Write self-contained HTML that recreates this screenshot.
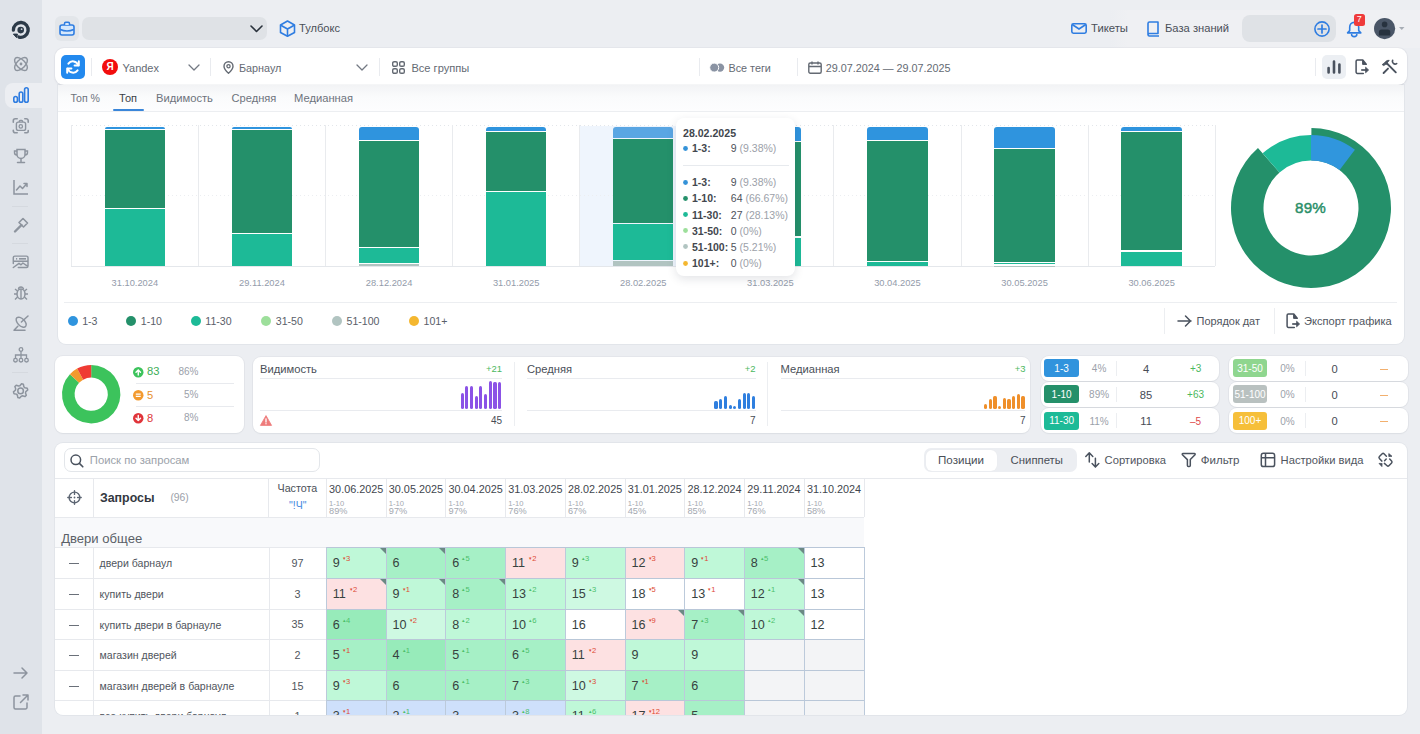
<!DOCTYPE html>
<html><head><meta charset="utf-8">
<style>
*{box-sizing:border-box;margin:0;padding:0}
html,body{width:1420px;height:734px;overflow:hidden}
body{background:#eceef2;font-family:"Liberation Sans",sans-serif;color:#474c55;position:relative}
.a{position:absolute}
.t{position:absolute;white-space:nowrap;line-height:1}
svg{position:absolute;overflow:visible}
</style></head><body>
<div class="a" style="left:0.00px;top:0.00px;width:42.00px;height:734.00px;background:#dfe3e9;border-radius:0px;"></div><div class="a" style="left:5.00px;top:83.00px;width:40.00px;height:25.00px;background:#eceef2;border-radius:0px;border-radius:8px 0 0 8px"></div><svg style="left:8.00px;top:18.00px;" width="26" height="24" viewBox="0 0 26 24"><path d="M5.4 12.16A7.4 7.4 0 1 1 10.88 19.05" fill="none" stroke="#2c3a48" stroke-width="3.3" stroke-linecap="round"/>
<circle cx="12.7" cy="12.1" r="3.3" fill="#2c3a48"/><circle cx="13.6" cy="11.2" r="0.9" fill="#c9d2dc"/>
<path d="M5.4 16.1L9.5 16.1 8.5 19.6Z" fill="#2c3a48" stroke="#2c3a48" stroke-width="1" stroke-linejoin="round"/></svg><svg style="left:13.00px;top:56.00px;" width="16" height="16" viewBox="0 0 16 16"><ellipse cx="8" cy="8" rx="8" ry="4.2" transform="rotate(45 8 8)" fill="none" stroke="#8d949e" stroke-width="1.5"/>
<ellipse cx="8" cy="8" rx="8" ry="4.2" transform="rotate(-45 8 8)" fill="none" stroke="#8d949e" stroke-width="1.5"/><circle cx="8" cy="8" r="1.4" fill="#8d949e"/></svg><svg style="left:13.00px;top:87.00px;" width="16" height="16" viewBox="0 0 16 16"><rect x="0.8" y="9.5" width="3.6" height="5.7" rx="1.8" fill="none" stroke="#2f7de1" stroke-width="1.6"/>
<rect x="6.2" y="5" width="3.6" height="10.2" rx="1.8" fill="none" stroke="#2f7de1" stroke-width="1.6"/>
<rect x="11.6" y="0.8" width="3.6" height="14.4" rx="1.8" fill="none" stroke="#2f7de1" stroke-width="1.6"/></svg><svg style="left:10.00px;top:116.00px;" width="22" height="22" viewBox="0 0 22 22"><path d="M3.3 6.3V4.7a2 2 0 0 1 2-2h1.9M14.8 2.7h1.4a2 2 0 0 1 2 2v1.6M18.2 14.6v0.9a1.2 1.2 0 0 1-1.2 1.2H14.8M7.2 16.7H5.3a2 2 0 0 1-2-2v-0.5" fill="none" stroke="#8d949e" stroke-width="1.6" stroke-linecap="round"/><rect x="6.4" y="6.1" width="9.2" height="8.3" rx="2" fill="none" stroke="#8d949e" stroke-width="1.4"/><path d="M9.3 6V5.4a0.9 0.9 0 0 1 .9-.9h1.5a0.9 0.9 0 0 1 .9.9V6" fill="none" stroke="#8d949e" stroke-width="1.3"/><circle cx="10.8" cy="10.4" r="1.7" fill="none" stroke="#8d949e" stroke-width="1.3"/></svg><svg style="left:13.00px;top:148.00px;" width="16" height="16" viewBox="0 0 16 16"><path d="M4 1.5h8v5a4 4 0 0 1-8 0z" fill="none" stroke="#8d949e" stroke-width="1.5"/><path d="M4 3H1.5v1.5A2.5 2.5 0 0 0 4 7M12 3h2.5v1.5A2.5 2.5 0 0 1 12 7" fill="none" stroke="#8d949e" stroke-width="1.4"/>
<path d="M8 10.5v3M4.5 14.5h7" fill="none" stroke="#8d949e" stroke-width="1.5" stroke-linecap="round"/></svg><svg style="left:13.00px;top:179.00px;" width="16" height="16" viewBox="0 0 16 16"><path d="M1 1v14h14" fill="none" stroke="#8d949e" stroke-width="1.5"/><path d="M3.5 11l3.5-4 2.5 2.5 4.5-5M11 4.5h3v3" fill="none" stroke="#8d949e" stroke-width="1.5" stroke-linejoin="round" stroke-linecap="round"/></svg><div class="a" style="left:12.00px;top:206.00px;width:16.00px;height:1.00px;background:#d5d9df;border-radius:0px;"></div><svg style="left:13.00px;top:217.00px;" width="16" height="16" viewBox="0 0 16 16"><path d="M2 14.5l6.5-6.5" stroke="#8d949e" stroke-width="2.4" stroke-linecap="round"/><path d="M6 5.5l4-4 4.5 4.5-4 4z" fill="none" stroke="#8d949e" stroke-width="1.6" stroke-linejoin="round"/></svg><div class="a" style="left:12.00px;top:243.00px;width:16.00px;height:1.00px;background:#d5d9df;border-radius:0px;"></div><svg style="left:10.00px;top:251.00px;" width="22" height="22" viewBox="0 0 22 22"><path d="M3.3 12.5V6.6a1.5 1.5 0 0 1 1.5-1.5h11.7a1.5 1.5 0 0 1 1.5 1.5v8.4a1.5 1.5 0 0 1-1.5 1.5H8.3M3.4 10.2h14.6M3.3 16.5L9 12.3l2 1.5 1.9-1.8 3.8 2.6" fill="none" stroke="#8d949e" stroke-width="1.45" stroke-linejoin="round" stroke-linecap="round"/><rect x="6" y="7" width="1.2" height="1.6" fill="#8d949e"/><rect x="9" y="7" width="7" height="1.6" fill="#8d949e"/></svg><svg style="left:13.00px;top:285.00px;" width="16" height="16" viewBox="0 0 16 16"><ellipse cx="8" cy="9" rx="4" ry="5" fill="none" stroke="#8d949e" stroke-width="1.5"/><path d="M8 4v10M4 9H1M15 9h-3M4.5 6L2 4M11.5 6L14 4M4.5 12L2 14.5M11.5 12L14 14.5M5.5 4.5A2.5 2.5 0 0 1 10.5 4.5" fill="none" stroke="#8d949e" stroke-width="1.4"/></svg><svg style="left:10.00px;top:311.00px;" width="22" height="22" viewBox="0 0 22 22"><ellipse cx="11.2" cy="11.2" rx="6.2" ry="3.5" transform="rotate(45 11.2 11.2)" fill="none" stroke="#8d949e" stroke-width="1.5"/><path d="M11.4 11L18 5M4 19.2h11M4 19.2l3.8-4" fill="none" stroke="#8d949e" stroke-width="1.5" stroke-linecap="round"/></svg><svg style="left:13.00px;top:347.00px;" width="16" height="16" viewBox="0 0 16 16"><circle cx="8" cy="2.5" r="1.8" fill="none" stroke="#8d949e" stroke-width="1.3"/><circle cx="2.5" cy="13.2" r="1.8" fill="none" stroke="#8d949e" stroke-width="1.3"/><circle cx="8" cy="13.2" r="1.8" fill="none" stroke="#8d949e" stroke-width="1.3"/><circle cx="13.5" cy="13.2" r="1.8" fill="none" stroke="#8d949e" stroke-width="1.3"/>
<path d="M8 4.3v7M2.5 11.4V8h11v3.4" fill="none" stroke="#8d949e" stroke-width="1.3"/></svg><div class="a" style="left:12.00px;top:372.00px;width:16.00px;height:1.00px;background:#d5d9df;border-radius:0px;"></div><svg style="left:10.00px;top:379.00px;" width="22" height="22" viewBox="0 0 22 22"><path d="M11.54 4.76L13.36 5.25L13.83 7.70L14.80 8.67L17.25 9.14L17.74 10.96L15.85 12.59L15.50 13.93L16.31 16.28L14.98 17.61L12.63 16.80L11.29 17.15L9.66 19.04L7.84 18.55L7.37 16.10L6.40 15.13L3.95 14.66L3.46 12.84L5.35 11.21L5.70 9.87L4.89 7.52L6.22 6.19L8.57 7.00L9.91 6.65Z" fill="none" stroke="#8d949e" stroke-width="1.5" stroke-linejoin="round"/><circle cx="10.6" cy="11.9" r="2.8" fill="none" stroke="#8d949e" stroke-width="1.5"/></svg><svg style="left:13.00px;top:666.00px;" width="16" height="14" viewBox="0 0 16 14"><path d="M1 7h13M9 2l5 5-5 5" fill="none" stroke="#8d949e" stroke-width="1.5" stroke-linecap="round" stroke-linejoin="round"/></svg><svg style="left:13.00px;top:694.00px;" width="16" height="16" viewBox="0 0 16 16"><path d="M7 2H2.5a1.5 1.5 0 0 0-1.5 1.5v10A1.5 1.5 0 0 0 2.5 15h10a1.5 1.5 0 0 0 1.5-1.5V9M10 1h5v5M15 1L7.5 8.5" fill="none" stroke="#8d949e" stroke-width="1.5" stroke-linecap="round" stroke-linejoin="round"/></svg><div class="a" style="left:1110.00px;top:10.00px;width:310.00px;height:38.00px;background:linear-gradient(90deg,rgba(240,241,244,0),#eff0f3 18px);border-radius:0px;"></div><div class="a" style="left:55.00px;top:16.00px;width:24.00px;height:25.00px;background:#e3e6ea;border-radius:6px;"></div><svg style="left:59.00px;top:21.00px;" width="16" height="15" viewBox="0 0 16 15"><rect x="1" y="4" width="14" height="10" rx="2" fill="#d6e8fc" stroke="#2f7de1" stroke-width="1.6"/><path d="M5.5 4V2.5a1.2 1.2 0 0 1 1.2-1.2h2.6a1.2 1.2 0 0 1 1.2 1.2V4" fill="#d6e8fc" stroke="#2f7de1" stroke-width="1.5"/><path d="M1.2 8.5Q8 11.5 14.8 8.5" fill="none" stroke="#2f7de1" stroke-width="1.5"/></svg><div class="a" style="left:82.00px;top:17.00px;width:185.00px;height:23.00px;background:#dfe2e6;border-radius:7px;"></div><svg style="left:250.00px;top:25.00px;" width="13" height="8" viewBox="0 0 13 8"><path d="M1 1l5.5 5.5L12 1" fill="none" stroke="#2a323c" stroke-width="1.6" stroke-linecap="round" stroke-linejoin="round"/></svg><svg style="left:279.00px;top:20.00px;" width="17" height="17" viewBox="0 0 17 17"><path d="M8.5 1L15.5 5v7.5L8.5 16.3 1.5 12.5V5z" fill="none" stroke="#2f7de1" stroke-width="1.6" stroke-linejoin="round"/><path d="M1.8 5.2L8.5 9l6.7-3.8M8.5 9v7" fill="none" stroke="#2f7de1" stroke-width="1.6"/></svg><div class="t" style="left:299.00px;top:23.06px;font-size:11.1px;color:#4a4f58;font-weight:400;">Тулбокс</div><svg style="left:1071.00px;top:23.00px;" width="16" height="11" viewBox="0 0 16 11"><rect x="0.8" y="0.8" width="14.4" height="9.4" rx="1.6" fill="none" stroke="#2f7de1" stroke-width="1.6"/><path d="M1.2 1.5L8 6l6.8-4.5" fill="none" stroke="#2f7de1" stroke-width="1.5"/></svg><div class="t" style="left:1091.00px;top:22.96px;font-size:11.3px;color:#4a4f58;font-weight:400;">Тикеты</div><svg style="left:1146.00px;top:21.00px;" width="14" height="16" viewBox="0 0 14 16"><path d="M2 13.5V2.5A1.5 1.5 0 0 1 3.5 1H12v11.5H3.3A1.3 1.3 0 0 0 2 13.8 1.3 1.3 0 0 0 3.3 15H13" fill="none" stroke="#2f7de1" stroke-width="1.6" stroke-linejoin="round"/></svg><div class="t" style="left:1165.00px;top:23.01px;font-size:11.2px;color:#4a4f58;font-weight:400;">База знаний</div><div class="a" style="left:1242.00px;top:15.00px;width:94.00px;height:27.00px;background:#dfe2e6;border-radius:8px;"></div><svg style="left:1314.00px;top:20.50px;" width="16" height="16" viewBox="0 0 16 16"><circle cx="8" cy="8" r="7.1" fill="none" stroke="#2f7de1" stroke-width="1.6"/><path d="M8 4v8M4 8h8" stroke="#2f7de1" stroke-width="1.7" stroke-linecap="round"/></svg><svg style="left:1346.00px;top:20.50px;" width="17" height="16" viewBox="0 0 17 16"><path d="M8.2 1.4C5.4 1.4 3.7 3.6 3.7 6.3V9.6L1.6 11.9H14.8L12.7 9.6V6.3C12.7 3.6 11 1.4 8.2 1.4Z" fill="none" stroke="#2f7de1" stroke-width="1.6" stroke-linejoin="round"/><path d="M5.6 13.6A2.6 2 0 0 0 10.8 13.6" fill="none" stroke="#2f7de1" stroke-width="1.6" stroke-linecap="round"/></svg><div class="a" style="left:1354.00px;top:14.00px;width:10.50px;height:11.50px;background:#ef3b3b;border-radius:2.5px;"></div><div class="t" style="left:1159.20px;width:400px;text-align:center;top:15.29px;font-size:9px;color:#fff;font-weight:400;">7</div><svg style="left:1374.00px;top:18.00px;" width="22" height="22" viewBox="0 0 22 22"><circle cx="10.6" cy="10.6" r="10.6" fill="#4a5667"/><circle cx="10.6" cy="6.4" r="2.8" fill="#27323f"/><path d="M4.9 17.4V14.2a2.6 2.6 0 0 1 2.6-2.6h6.2a2.6 2.6 0 0 1 2.6 2.6V17.4z" fill="#27323f"/></svg><svg style="left:1399.00px;top:27.00px;" width="6" height="4" viewBox="0 0 6 4"><path d="M0 0h5.5L2.75 3z" fill="#a7adb5"/></svg><div class="a" style="left:55.00px;top:48.00px;width:1352.00px;height:37.00px;background:#fff;border-radius:9px;box-shadow:0 0 0 1px rgba(30,40,60,.03),0 1px 3px rgba(30,40,60,.05)"></div><div class="a" style="left:61.00px;top:55.00px;width:24.00px;height:24.00px;background:#2289ee;border-radius:5px;"></div><svg style="left:65.00px;top:59.00px;" width="16" height="16" viewBox="0 0 16 16"><path d="M13.2 6.2A5.6 5.6 0 0 0 3.4 4.6" fill="none" stroke="#fff" stroke-width="2" stroke-linecap="round"/><path d="M13.8 2.3v4.2H9.6" fill="none" stroke="#fff" stroke-width="2" stroke-linecap="round" stroke-linejoin="round"/>
<path d="M2.8 9.8a5.6 5.6 0 0 0 9.8 1.6" fill="none" stroke="#fff" stroke-width="2" stroke-linecap="round"/><path d="M2.2 13.7V9.5h4.2" fill="none" stroke="#fff" stroke-width="2" stroke-linecap="round" stroke-linejoin="round"/></svg><div class="a" style="left:91.00px;top:58.00px;width:1.00px;height:18.00px;background:#e9ebef;border-radius:0px;"></div><svg style="left:102.00px;top:59.00px;" width="16" height="16" viewBox="0 0 16 16"><circle cx="8" cy="8" r="8" fill="#f20d0d"/></svg><div class="t" style="left:-89.80px;width:400px;text-align:center;top:62.40px;font-size:10px;color:#fff;font-weight:700;">Я</div><div class="t" style="left:122.50px;top:62.61px;font-size:11.0px;color:#646a73;font-weight:400;">Yandex</div><svg style="left:188.00px;top:64.00px;" width="12" height="7" viewBox="0 0 12 7"><path d="M1 1l5 5 5-5" fill="none" stroke="#737983" stroke-width="1.3" stroke-linecap="round" stroke-linejoin="round"/></svg><div class="a" style="left:210.00px;top:58.00px;width:1.00px;height:18.00px;background:#e9ebef;border-radius:0px;"></div><svg style="left:222.50px;top:60.50px;" width="11" height="13" viewBox="0 0 11 13"><path d="M5.5 12.3C2.5 9.5 1 7.2 1 5.2a4.5 4.5 0 0 1 9 0c0 2-1.5 4.3-4.5 7.1z" fill="none" stroke="#646a73" stroke-width="1.4" stroke-linejoin="round"/><circle cx="5.5" cy="5.2" r="1.6" fill="none" stroke="#646a73" stroke-width="1.3"/></svg><div class="t" style="left:239.00px;top:62.71px;font-size:10.8px;color:#646a73;font-weight:400;">Барнаул</div><svg style="left:356.00px;top:64.00px;" width="12" height="7" viewBox="0 0 12 7"><path d="M1 1l5 5 5-5" fill="none" stroke="#737983" stroke-width="1.3" stroke-linecap="round" stroke-linejoin="round"/></svg><div class="a" style="left:379.00px;top:58.00px;width:1.00px;height:18.00px;background:#e9ebef;border-radius:0px;"></div><svg style="left:392.00px;top:61.00px;" width="13" height="13" viewBox="0 0 13 13"><rect x="0.7" y="0.7" width="4.6" height="4.6" rx="1.4" fill="none" stroke="#646a73" stroke-width="1.4"/><rect x="7.7" y="0.7" width="4.6" height="4.6" rx="1.4" fill="none" stroke="#646a73" stroke-width="1.4"/><rect x="0.7" y="7.7" width="4.6" height="4.6" rx="1.4" fill="none" stroke="#646a73" stroke-width="1.4"/><rect x="7.7" y="7.7" width="4.6" height="4.6" rx="1.4" fill="none" stroke="#646a73" stroke-width="1.4"/></svg><div class="t" style="left:411.40px;top:62.56px;font-size:11.1px;color:#646a73;font-weight:400;">Все группы</div><div class="a" style="left:699.00px;top:58.00px;width:1.00px;height:18.00px;background:#e9ebef;border-radius:0px;"></div><svg style="left:709.00px;top:62.80px;" width="16" height="10" viewBox="0 0 16 10"><circle cx="11" cy="4.6" r="4.2" fill="#8a93a3"/><circle cx="5.2" cy="4.6" r="4.5" fill="#8a93a3" stroke="#fff" stroke-width="1"/></svg><div class="t" style="left:728.50px;top:62.71px;font-size:10.8px;color:#646a73;font-weight:400;">Все теги</div><div class="a" style="left:797.00px;top:58.00px;width:1.00px;height:18.00px;background:#e9ebef;border-radius:0px;"></div><svg style="left:808.00px;top:60.50px;" width="14" height="13" viewBox="0 0 14 13"><rect x="0.8" y="2" width="12.4" height="10.2" rx="1.5" fill="none" stroke="#646a73" stroke-width="1.4"/><path d="M1 5.5h12M4 0.5v3M10 0.5v3" stroke="#646a73" stroke-width="1.4"/></svg><div class="t" style="left:825.70px;top:62.71px;font-size:10.8px;color:#646a73;font-weight:400;">29.07.2024 — 29.07.2025</div><div class="a" style="left:1315.00px;top:58.00px;width:1.00px;height:18.00px;background:#e9ebef;border-radius:0px;"></div><div class="a" style="left:1322.00px;top:55.00px;width:24.00px;height:24.00px;background:#eceff3;border-radius:5px;"></div><svg style="left:1327.00px;top:60.00px;" width="14" height="14" viewBox="0 0 14 14"><path d="M1.6 8v4.5M7 1.6v10.9M12.4 4.5v8" stroke="#4a525e" stroke-width="2.6" stroke-linecap="round"/></svg><svg style="left:1355.00px;top:59.00px;" width="14" height="16" viewBox="0 0 14 16"><path d="M8.3 14.4H2.4a1.3 1.3 0 0 1-1.3-1.3V2.3A1.3 1.3 0 0 1 2.4 1h5.4l3.4 4.2" fill="none" stroke="#4a525e" stroke-width="1.5" stroke-linejoin="round" stroke-linecap="round"/><path d="M7.6 1.6v3.8h3.6z" fill="#4a525e" stroke="#4a525e" stroke-width="1" stroke-linejoin="round"/><path d="M6.2 11h5.6" stroke="#4a525e" stroke-width="1.7"/><path d="M10.6 8.2l3 2.8-3 2.8z" fill="#4a525e" stroke="#4a525e" stroke-width="0.8" stroke-linejoin="round"/></svg><svg style="left:1376.00px;top:54.00px;" width="28" height="26" viewBox="0 0 28 26"><path d="M10.5 9L19.8 18.3" stroke="#4a525e" stroke-width="1.9" stroke-linecap="round"/><path d="M6.2 10.6L8.2 9.2 9.6 7.6Q11.2 6.1 13.2 6.3L11.6 8.4 10.8 10.2 9.3 10.6 7.6 11.6Z" fill="#4a525e" stroke="#4a525e" stroke-width="0.9" stroke-linejoin="round"/><path d="M7.6 19L12 14.6" stroke="#4a525e" stroke-width="1.9" stroke-linecap="round"/><path d="M16.6 6.3A2.7 2.7 0 0 0 20.6 9.6" fill="none" stroke="#4a525e" stroke-width="1.7" stroke-linecap="round"/></svg><div class="a" style="left:58.00px;top:85.00px;width:1346.00px;height:259.00px;background:#fff;border-radius:0px;border-radius:0 0 8px 8px;box-shadow:0 0 0 1px rgba(30,40,60,.045)"></div><div class="a" style="left:58.00px;top:85.00px;width:1346.00px;height:26.00px;background:linear-gradient(#f2f3f5,#fafbfc 45%,#fdfdfe);border-radius:0px;"></div><div class="a" style="left:58.00px;top:111.00px;width:1346.00px;height:1.00px;background:#eceef1;border-radius:0px;"></div><div class="t" style="left:70.40px;top:93.11px;font-size:10.6px;color:#6d737c;font-weight:400;">Топ %</div><div class="t" style="left:119.00px;top:92.89px;font-size:11.04px;color:#3a3f47;font-weight:400;">Топ</div><div class="t" style="left:156.00px;top:92.81px;font-size:11.2px;color:#6d737c;font-weight:400;">Видимость</div><div class="t" style="left:231.60px;top:92.86px;font-size:11.1px;color:#6d737c;font-weight:400;">Средняя</div><div class="t" style="left:294.00px;top:92.81px;font-size:11.2px;color:#6d737c;font-weight:400;">Медианная</div><div class="a" style="left:112.70px;top:109.30px;width:31.30px;height:2.20px;background:#3a86d9;border-radius:1px;"></div><div class="a" style="left:579.50px;top:126.00px;width:127.00px;height:140.00px;background:#eff5fd;border-radius:0px;"></div><div class="a" style="left:72.3px;top:125px;width:1142.8999999999999px;height:1px;background:repeating-linear-gradient(90deg,#e3e6ea 0 1px,transparent 1px 4px)"></div><div class="a" style="left:72.3px;top:195px;width:1142.8999999999999px;height:1px;background:repeating-linear-gradient(90deg,#eceef1 0 1px,transparent 1px 4px)"></div><div class="a" style="left:70.80px;top:125.00px;width:1.00px;height:141.00px;background:#e9ebee;border-radius:0px;"></div><div class="a" style="left:197.90px;top:125.00px;width:1.00px;height:141.00px;background:#e9ebee;border-radius:0px;"></div><div class="a" style="left:325.00px;top:125.00px;width:1.00px;height:141.00px;background:#e9ebee;border-radius:0px;"></div><div class="a" style="left:452.10px;top:125.00px;width:1.00px;height:141.00px;background:#e9ebee;border-radius:0px;"></div><div class="a" style="left:579.20px;top:125.00px;width:1.00px;height:141.00px;background:#e9ebee;border-radius:0px;"></div><div class="a" style="left:706.30px;top:125.00px;width:1.00px;height:141.00px;background:#e9ebee;border-radius:0px;"></div><div class="a" style="left:833.40px;top:125.00px;width:1.00px;height:141.00px;background:#e9ebee;border-radius:0px;"></div><div class="a" style="left:960.50px;top:125.00px;width:1.00px;height:141.00px;background:#e9ebee;border-radius:0px;"></div><div class="a" style="left:1087.60px;top:125.00px;width:1.00px;height:141.00px;background:#e9ebee;border-radius:0px;"></div><div class="a" style="left:1214.70px;top:125.00px;width:1.00px;height:141.00px;background:#e9ebee;border-radius:0px;"></div><div class="a" style="left:71.30px;top:265.50px;width:1143.90px;height:1.00px;background:#e4e7eb;border-radius:0px;"></div><div class="a" style="left:104.65px;top:126.60px;width:60.40px;height:2.10px;background:#2f94de;border-radius:0px;border-radius:3px 3px 0 0"></div><div class="a" style="left:104.65px;top:129.70px;width:60.40px;height:78.00px;background:#24906a;border-radius:0px;"></div><div class="a" style="left:104.65px;top:208.70px;width:60.40px;height:57.30px;background:#1dba97;border-radius:0px;"></div><div class="t" style="left:-65.15px;width:400px;text-align:center;top:279.44px;font-size:9.3px;color:#939baa;font-weight:400;">31.10.2024</div><div class="a" style="left:231.75px;top:126.60px;width:60.40px;height:2.10px;background:#2f94de;border-radius:0px;border-radius:3px 3px 0 0"></div><div class="a" style="left:231.75px;top:129.70px;width:60.40px;height:103.40px;background:#24906a;border-radius:0px;"></div><div class="a" style="left:231.75px;top:234.10px;width:60.40px;height:31.90px;background:#1dba97;border-radius:0px;"></div><div class="t" style="left:61.95px;width:400px;text-align:center;top:279.44px;font-size:9.3px;color:#939baa;font-weight:400;">29.11.2024</div><div class="a" style="left:358.85px;top:126.60px;width:60.40px;height:13.60px;background:#2f94de;border-radius:0px;border-radius:3px 3px 0 0"></div><div class="a" style="left:358.85px;top:141.20px;width:60.40px;height:105.60px;background:#24906a;border-radius:0px;"></div><div class="a" style="left:358.85px;top:247.80px;width:60.40px;height:15.50px;background:#1dba97;border-radius:0px;"></div><div class="a" style="left:358.85px;top:264.30px;width:60.40px;height:1.70px;background:#b1c4c1;border-radius:0px;"></div><div class="t" style="left:189.05px;width:400px;text-align:center;top:279.44px;font-size:9.3px;color:#939baa;font-weight:400;">28.12.2024</div><div class="a" style="left:485.95px;top:126.60px;width:60.40px;height:4.50px;background:#2f94de;border-radius:0px;border-radius:3px 3px 0 0"></div><div class="a" style="left:485.95px;top:132.10px;width:60.40px;height:59.20px;background:#24906a;border-radius:0px;"></div><div class="a" style="left:485.95px;top:192.30px;width:60.40px;height:73.70px;background:#1dba97;border-radius:0px;"></div><div class="t" style="left:316.15px;width:400px;text-align:center;top:279.44px;font-size:9.3px;color:#939baa;font-weight:400;">31.01.2025</div><div class="a" style="left:613.05px;top:126.60px;width:60.40px;height:11.10px;background:#5aa6e3;border-radius:0px;border-radius:3px 3px 0 0"></div><div class="a" style="left:613.05px;top:138.70px;width:60.40px;height:84.60px;background:#24906a;border-radius:0px;"></div><div class="a" style="left:613.05px;top:224.30px;width:60.40px;height:35.40px;background:#1dba97;border-radius:0px;"></div><div class="a" style="left:613.05px;top:260.70px;width:60.40px;height:5.30px;background:#b1c4c1;border-radius:0px;"></div><div class="t" style="left:443.25px;width:400px;text-align:center;top:279.44px;font-size:9.3px;color:#939baa;font-weight:400;">28.02.2025</div><div class="a" style="left:740.15px;top:126.60px;width:60.40px;height:14.70px;background:#2f94de;border-radius:0px;border-radius:3px 3px 0 0"></div><div class="a" style="left:740.15px;top:142.30px;width:60.40px;height:94.20px;background:#24906a;border-radius:0px;"></div><div class="a" style="left:740.15px;top:237.50px;width:60.40px;height:28.00px;background:#1dba97;border-radius:0px;"></div><div class="t" style="left:570.35px;width:400px;text-align:center;top:279.44px;font-size:9.3px;color:#939baa;font-weight:400;">31.03.2025</div><div class="a" style="left:867.25px;top:126.60px;width:60.40px;height:13.30px;background:#2f94de;border-radius:0px;border-radius:3px 3px 0 0"></div><div class="a" style="left:867.25px;top:140.90px;width:60.40px;height:120.40px;background:#24906a;border-radius:0px;"></div><div class="a" style="left:867.25px;top:262.30px;width:60.40px;height:3.70px;background:#1dba97;border-radius:0px;"></div><div class="t" style="left:697.45px;width:400px;text-align:center;top:279.44px;font-size:9.3px;color:#939baa;font-weight:400;">30.04.2025</div><div class="a" style="left:994.35px;top:126.60px;width:60.40px;height:21.10px;background:#2f94de;border-radius:0px;border-radius:3px 3px 0 0"></div><div class="a" style="left:994.35px;top:148.70px;width:60.40px;height:113.60px;background:#24906a;border-radius:0px;"></div><div class="a" style="left:994.35px;top:263.30px;width:60.40px;height:1.20px;background:#1dba97;border-radius:0px;"></div><div class="a" style="left:994.35px;top:265.50px;width:60.40px;height:0.50px;background:#b1c4c1;border-radius:0px;"></div><div class="t" style="left:824.55px;width:400px;text-align:center;top:279.44px;font-size:9.3px;color:#939baa;font-weight:400;">30.05.2025</div><div class="a" style="left:1121.45px;top:126.60px;width:60.40px;height:4.70px;background:#2f94de;border-radius:0px;border-radius:3px 3px 0 0"></div><div class="a" style="left:1121.45px;top:132.30px;width:60.40px;height:118.20px;background:#24906a;border-radius:0px;"></div><div class="a" style="left:1121.45px;top:251.50px;width:60.40px;height:14.50px;background:#1dba97;border-radius:0px;"></div><div class="t" style="left:951.65px;width:400px;text-align:center;top:279.44px;font-size:9.3px;color:#939baa;font-weight:400;">30.06.2025</div><svg style="left:1230.50px;top:128.00px;" width="160" height="160" viewBox="0 0 160 160"><path d="M80.42 0.00A80 80 0 1 1 26.99 20.08L48.53 44.42A47.5 47.5 0 1 0 80.25 32.50Z" fill="#24906a"/><path d="M31.63 25.33A73 73 0 0 1 80.00 7.00L80.00 32.50A47.5 47.5 0 0 0 48.53 44.42Z" fill="#1dba97"/><path d="M80.00 7.00A73 73 0 0 1 123.93 21.70L108.59 42.06A47.5 47.5 0 0 0 80.00 32.50Z" fill="#3096dd"/></svg><div class="t" style="left:1110.50px;width:400px;text-align:center;top:200.15px;font-size:15.2px;color:#2a8f69;font-weight:400;letter-spacing:0.2px;-webkit-text-stroke:0.45px #2a8f69">89%</div><div class="a" style="left:676px;top:118px;width:119px;height:158px;background:#fff;border-radius:8px;box-shadow:0 3px 10px rgba(40,50,70,.13)"></div><div class="t" style="left:683.00px;top:127.61px;font-size:10.6px;color:#41464d;font-weight:700;">28.02.2025</div><svg style="left:683.20px;top:146.00px;" width="5" height="5" viewBox="0 0 5 5"><circle cx="2.5" cy="2.5" r="2.4" fill="#3492d8"/></svg><div class="t" style="left:692.00px;top:143.35px;font-size:10.5px;color:#43474e;font-weight:700;">1-3:</div><div class="t" style="left:730.8px;top:143.35px;font-size:10.5px;color:#4d5159">9 <span style="color:#9ca1a9">(9.38%)</span></div><div class="a" style="left:683.00px;top:165.00px;width:106.00px;height:1.00px;background:#e7eaee;border-radius:0px;"></div><svg style="left:683.20px;top:180.00px;" width="5" height="5" viewBox="0 0 5 5"><circle cx="2.5" cy="2.5" r="2.4" fill="#3492d8"/></svg><div class="t" style="left:692.00px;top:177.35px;font-size:10.5px;color:#43474e;font-weight:700;">1-3:</div><div class="t" style="left:730.8px;top:177.35px;font-size:10.5px;color:#4d5159">9 <span style="color:#9ca1a9">(9.38%)</span></div><svg style="left:683.20px;top:196.10px;" width="5" height="5" viewBox="0 0 5 5"><circle cx="2.5" cy="2.5" r="2.4" fill="#24906a"/></svg><div class="t" style="left:692.00px;top:193.45px;font-size:10.5px;color:#43474e;font-weight:700;">1-10:</div><div class="t" style="left:730.8px;top:193.45px;font-size:10.5px;color:#4d5159">64 <span style="color:#9ca1a9">(66.67%)</span></div><svg style="left:683.20px;top:212.20px;" width="5" height="5" viewBox="0 0 5 5"><circle cx="2.5" cy="2.5" r="2.4" fill="#1dba97"/></svg><div class="t" style="left:692.00px;top:209.55px;font-size:10.5px;color:#43474e;font-weight:700;">11-30:</div><div class="t" style="left:730.8px;top:209.55px;font-size:10.5px;color:#4d5159">27 <span style="color:#9ca1a9">(28.13%)</span></div><svg style="left:683.20px;top:228.30px;" width="5" height="5" viewBox="0 0 5 5"><circle cx="2.5" cy="2.5" r="2.4" fill="#9ddf9b"/></svg><div class="t" style="left:692.00px;top:225.66px;font-size:10.5px;color:#43474e;font-weight:700;">31-50:</div><div class="t" style="left:730.8px;top:225.66px;font-size:10.5px;color:#4d5159">0 <span style="color:#9ca1a9">(0%)</span></div><svg style="left:683.20px;top:244.40px;" width="5" height="5" viewBox="0 0 5 5"><circle cx="2.5" cy="2.5" r="2.4" fill="#b1c4c1"/></svg><div class="t" style="left:692.00px;top:241.75px;font-size:10.5px;color:#43474e;font-weight:700;">51-100:</div><div class="t" style="left:730.8px;top:241.75px;font-size:10.5px;color:#4d5159">5 <span style="color:#9ca1a9">(5.21%)</span></div><svg style="left:683.20px;top:260.50px;" width="5" height="5" viewBox="0 0 5 5"><circle cx="2.5" cy="2.5" r="2.4" fill="#f4b730"/></svg><div class="t" style="left:692.00px;top:257.86px;font-size:10.5px;color:#43474e;font-weight:700;">101+:</div><div class="t" style="left:730.8px;top:257.86px;font-size:10.5px;color:#4d5159">0 <span style="color:#9ca1a9">(0%)</span></div><div class="a" style="left:63.50px;top:302.00px;width:1333.50px;height:1.00px;background:#eceef1;border-radius:0px;"></div><svg style="left:67.70px;top:316.00px;" width="10" height="10" viewBox="0 0 10 10"><circle cx="5" cy="5" r="5" fill="#2f94de"/></svg><div class="t" style="left:82.20px;top:315.81px;font-size:10.6px;color:#5a6069;font-weight:400;">1-3</div><svg style="left:126.30px;top:316.00px;" width="10" height="10" viewBox="0 0 10 10"><circle cx="5" cy="5" r="5" fill="#24906a"/></svg><div class="t" style="left:140.80px;top:315.81px;font-size:10.6px;color:#5a6069;font-weight:400;">1-10</div><svg style="left:190.80px;top:316.00px;" width="10" height="10" viewBox="0 0 10 10"><circle cx="5" cy="5" r="5" fill="#1dba97"/></svg><div class="t" style="left:205.30px;top:315.81px;font-size:10.6px;color:#5a6069;font-weight:400;">11-30</div><svg style="left:261.30px;top:316.00px;" width="10" height="10" viewBox="0 0 10 10"><circle cx="5" cy="5" r="5" fill="#9ddf9b"/></svg><div class="t" style="left:275.80px;top:315.81px;font-size:10.6px;color:#5a6069;font-weight:400;">31-50</div><svg style="left:332.00px;top:316.00px;" width="10" height="10" viewBox="0 0 10 10"><circle cx="5" cy="5" r="5" fill="#b1c4c1"/></svg><div class="t" style="left:346.50px;top:315.81px;font-size:10.6px;color:#5a6069;font-weight:400;">51-100</div><svg style="left:409.00px;top:316.00px;" width="10" height="10" viewBox="0 0 10 10"><circle cx="5" cy="5" r="5" fill="#f4b730"/></svg><div class="t" style="left:423.50px;top:315.81px;font-size:10.6px;color:#5a6069;font-weight:400;">101+</div><div class="a" style="left:1164.00px;top:308.00px;width:1.00px;height:26.00px;background:#eceef1;border-radius:0px;"></div><svg style="left:1176.50px;top:315.00px;" width="15" height="12" viewBox="0 0 15 12"><path d="M1 6h13M8.5 1l5 5-5 5" fill="none" stroke="#4a525e" stroke-width="1.5" stroke-linecap="round" stroke-linejoin="round"/></svg><div class="t" style="left:1196.60px;top:315.63px;font-size:10.95px;color:#4f555e;font-weight:400;">Порядок дат</div><div class="a" style="left:1273.50px;top:308.00px;width:1.00px;height:26.00px;background:#eceef1;border-radius:0px;"></div><svg style="left:1286.00px;top:313.00px;" width="14" height="16" viewBox="0 0 14 16"><path d="M8.3 14.4H2.4a1.3 1.3 0 0 1-1.3-1.3V2.3A1.3 1.3 0 0 1 2.4 1h5.4l3.4 4.2" fill="none" stroke="#4a525e" stroke-width="1.5" stroke-linejoin="round" stroke-linecap="round"/><path d="M7.6 1.6v3.8h3.6z" fill="#4a525e" stroke="#4a525e" stroke-width="1" stroke-linejoin="round"/><path d="M6.2 11h5.6" stroke="#4a525e" stroke-width="1.7"/><path d="M10.6 8.2l3 2.8-3 2.8z" fill="#4a525e" stroke="#4a525e" stroke-width="0.8" stroke-linejoin="round"/></svg><div class="t" style="left:1304.00px;top:315.56px;font-size:11.1px;color:#4f555e;font-weight:400;">Экспорт графика</div><div class="a" style="left:55.00px;top:356.00px;width:189.00px;height:76.50px;background:#fff;border-radius:8px;box-shadow:0 0 0 1px rgba(30,40,60,.035),0 1px 2px rgba(30,40,60,.04)"></div><svg style="left:61.80px;top:364.80px;" width="58.4" height="58.4" viewBox="0 0 58.4 58.4"><path d="M29.20 0.00A29.2 29.2 0 1 1 7.91 9.21L17.10 17.84A16.6 16.6 0 1 0 29.20 12.60Z" fill="#3cc35c"/><path d="M7.91 9.21A29.2 29.2 0 0 1 15.13 3.61L21.20 14.65A16.6 16.6 0 0 0 17.10 17.84Z" fill="#f39a2e"/><path d="M15.13 3.61A29.2 29.2 0 0 1 29.20 0.00L29.20 12.60A16.6 16.6 0 0 0 21.20 14.65Z" fill="#ef3b33"/></svg><svg style="left:133.25px;top:366.55px;" width="10.5" height="10.5" viewBox="0 0 10.5 10.5"><circle cx="5.25" cy="5.25" r="5.25" fill="#3cc35c"/><path d="M5.25 8V3M3 5.2l2.25-2.3 2.25 2.3" fill="none" stroke="#fff" stroke-width="1.4" stroke-linecap="round" stroke-linejoin="round"/></svg><div class="t" style="left:147.00px;top:366.31px;font-size:11.2px;color:#3dae57;font-weight:400;">83</div><div class="t" style="right:1221.50px;top:366.90px;font-size:10px;color:#9ba1aa;font-weight:400;">86%</div><svg style="left:133.25px;top:389.75px;" width="10.5" height="10.5" viewBox="0 0 10.5 10.5"><circle cx="5.25" cy="5.25" r="5.25" fill="#f39a2e"/><path d="M2.8 4.2h4.9M2.8 6.4h4.9" stroke="#fff" stroke-width="1.3"/></svg><div class="t" style="left:147.00px;top:389.51px;font-size:11.2px;color:#e8902a;font-weight:400;">5</div><div class="t" style="right:1221.50px;top:390.10px;font-size:10px;color:#9ba1aa;font-weight:400;">5%</div><svg style="left:133.25px;top:412.75px;" width="10.5" height="10.5" viewBox="0 0 10.5 10.5"><circle cx="5.25" cy="5.25" r="5.25" fill="#e0343a"/><path d="M5.25 2.5v5M3 5.3l2.25 2.3 2.25-2.3" fill="none" stroke="#fff" stroke-width="1.4" stroke-linecap="round" stroke-linejoin="round"/></svg><div class="t" style="left:147.00px;top:412.51px;font-size:11.2px;color:#dd3b3b;font-weight:400;">8</div><div class="t" style="right:1221.50px;top:413.10px;font-size:10px;color:#9ba1aa;font-weight:400;">8%</div><div class="a" style="left:136.00px;top:383.00px;width:97.50px;height:1.00px;background:#e8eaee;border-radius:0px;"></div><div class="a" style="left:136.00px;top:406.00px;width:97.50px;height:1.00px;background:#e8eaee;border-radius:0px;"></div><div class="a" style="left:253.00px;top:356.50px;width:777.00px;height:76.00px;background:#fff;border-radius:8px;box-shadow:0 0 0 1px rgba(30,40,60,.035),0 1px 2px rgba(30,40,60,.04)"></div><div class="t" style="left:260.00px;top:363.51px;font-size:11.2px;color:#4a4f58;font-weight:400;">Видимость</div><div class="t" style="right:918.00px;top:363.85px;font-size:9.5px;color:#4cb860;font-weight:400;">+21</div><div class="a" style="left:260.00px;top:378.00px;width:242.00px;height:1.00px;background:#e9ebef;border-radius:0px;"></div><div class="a" style="left:260.00px;top:410.00px;width:242.00px;height:1.00px;background:#e9ebef;border-radius:0px;"></div><div class="a" style="left:460.56px;top:393.40px;width:3.20px;height:15.20px;background:#8b52e6;border-radius:1.6px;"></div><div class="a" style="left:465.24px;top:385.50px;width:3.20px;height:23.10px;background:#8b52e6;border-radius:1.6px;"></div><div class="a" style="left:469.92px;top:385.50px;width:3.20px;height:23.10px;background:#8b52e6;border-radius:1.6px;"></div><div class="a" style="left:474.60px;top:396.40px;width:3.20px;height:12.20px;background:#8b52e6;border-radius:1.6px;"></div><div class="a" style="left:479.28px;top:386.30px;width:3.20px;height:22.30px;background:#8b52e6;border-radius:1.6px;"></div><div class="a" style="left:483.96px;top:394.20px;width:3.20px;height:14.40px;background:#8b52e6;border-radius:1.6px;"></div><div class="a" style="left:488.64px;top:380.80px;width:3.20px;height:27.80px;background:#8b52e6;border-radius:1.6px;"></div><div class="a" style="left:493.32px;top:382.20px;width:3.20px;height:26.40px;background:#8b52e6;border-radius:1.6px;"></div><div class="a" style="left:498.00px;top:381.60px;width:3.20px;height:27.00px;background:#8b52e6;border-radius:1.6px;"></div><div class="t" style="right:918.00px;top:415.60px;font-size:10px;color:#474c55;font-weight:400;">45</div><svg style="left:260.00px;top:415.00px;" width="12" height="11" viewBox="0 0 12 11"><path d="M6 0.6L11.6 10.4H0.4z" fill="#ee7b7b" stroke="#ee7b7b" stroke-width="0.8" stroke-linejoin="round"/><path d="M6 3.8v3.3" stroke="#fff" stroke-width="1.3" stroke-linecap="round"/><circle cx="6" cy="8.8" r="0.7" fill="#fff"/></svg><div class="a" style="left:514.00px;top:362.00px;width:1.00px;height:64.00px;background:#eceef1;border-radius:0px;"></div><div class="t" style="left:527.00px;top:363.51px;font-size:11.2px;color:#4a4f58;font-weight:400;">Средняя</div><div class="t" style="right:664.50px;top:363.85px;font-size:9.5px;color:#4cb860;font-weight:400;">+2</div><div class="a" style="left:527.00px;top:378.00px;width:228.50px;height:1.00px;background:#e9ebef;border-radius:0px;"></div><div class="a" style="left:527.00px;top:410.00px;width:228.50px;height:1.00px;background:#e9ebef;border-radius:0px;"></div><div class="a" style="left:714.46px;top:400.70px;width:3.20px;height:7.90px;background:#2f7fdf;border-radius:1.6px;"></div><div class="a" style="left:719.14px;top:398.50px;width:3.20px;height:10.10px;background:#2f7fdf;border-radius:1.6px;"></div><div class="a" style="left:723.82px;top:396.40px;width:3.20px;height:12.20px;background:#2f7fdf;border-radius:1.6px;"></div><div class="a" style="left:728.50px;top:404.80px;width:3.20px;height:3.80px;background:#2f7fdf;border-radius:1.6px;"></div><div class="a" style="left:733.18px;top:406.20px;width:3.20px;height:2.40px;background:#2f7fdf;border-radius:1.6px;"></div><div class="a" style="left:737.86px;top:399.40px;width:3.20px;height:9.20px;background:#2f7fdf;border-radius:1.6px;"></div><div class="a" style="left:742.54px;top:393.40px;width:3.20px;height:15.20px;background:#2f7fdf;border-radius:1.6px;"></div><div class="a" style="left:747.22px;top:393.40px;width:3.20px;height:15.20px;background:#2f7fdf;border-radius:1.6px;"></div><div class="a" style="left:751.90px;top:395.50px;width:3.20px;height:13.10px;background:#2f7fdf;border-radius:1.6px;"></div><div class="t" style="right:664.50px;top:415.60px;font-size:10px;color:#474c55;font-weight:400;">7</div><div class="a" style="left:767.00px;top:362.00px;width:1.00px;height:64.00px;background:#eceef1;border-radius:0px;"></div><div class="t" style="left:780.60px;top:363.51px;font-size:11.2px;color:#4a4f58;font-weight:400;">Медианная</div><div class="t" style="right:394.50px;top:363.85px;font-size:9.5px;color:#4cb860;font-weight:400;">+3</div><div class="a" style="left:780.60px;top:378.00px;width:244.90px;height:1.00px;background:#e9ebef;border-radius:0px;"></div><div class="a" style="left:780.60px;top:410.00px;width:244.90px;height:1.00px;background:#e9ebef;border-radius:0px;"></div><div class="a" style="left:983.96px;top:404.00px;width:3.20px;height:4.60px;background:#ef8f2a;border-radius:1.6px;"></div><div class="a" style="left:988.64px;top:398.50px;width:3.20px;height:10.10px;background:#ef8f2a;border-radius:1.6px;"></div><div class="a" style="left:993.32px;top:396.10px;width:3.20px;height:12.50px;background:#ef8f2a;border-radius:1.6px;"></div><div class="a" style="left:998.00px;top:406.20px;width:3.20px;height:2.40px;background:#ef8f2a;border-radius:1.6px;"></div><div class="a" style="left:1002.68px;top:397.70px;width:3.20px;height:10.90px;background:#ef8f2a;border-radius:1.6px;"></div><div class="a" style="left:1007.36px;top:398.50px;width:3.20px;height:10.10px;background:#ef8f2a;border-radius:1.6px;"></div><div class="a" style="left:1012.04px;top:396.10px;width:3.20px;height:12.50px;background:#ef8f2a;border-radius:1.6px;"></div><div class="a" style="left:1016.72px;top:393.90px;width:3.20px;height:14.70px;background:#ef8f2a;border-radius:1.6px;"></div><div class="a" style="left:1021.40px;top:396.10px;width:3.20px;height:12.50px;background:#ef8f2a;border-radius:1.6px;"></div><div class="t" style="right:394.50px;top:415.60px;font-size:10px;color:#474c55;font-weight:400;">7</div><div class="a" style="left:1040.60px;top:356.00px;width:178.90px;height:24.50px;background:#fff;border-radius:8px;box-shadow:0 0 0 1px rgba(30,40,60,.035),0 1px 2px rgba(30,40,60,.04)"></div><div class="a" style="left:1044.40px;top:359.40px;width:34.40px;height:18.00px;background:#3093dd;border-radius:3px;"></div><div class="t" style="left:861.60px;width:400px;text-align:center;top:364.10px;font-size:10px;color:#fff;font-weight:400;">1-3</div><div class="t" style="left:899.10px;width:400px;text-align:center;top:364.30px;font-size:10px;color:#9ba1aa;font-weight:400;">4%</div><div class="a" style="left:1116.40px;top:361.00px;width:1.00px;height:15.00px;background:#eceef1;border-radius:0px;"></div><div class="t" style="left:946.10px;width:400px;text-align:center;top:363.91px;font-size:11.2px;color:#474c55;font-weight:400;">4</div><div class="t" style="left:995.60px;width:400px;text-align:center;top:364.30px;font-size:10px;color:#4cb860;font-weight:400;">+3</div><div class="a" style="left:1040.60px;top:382.00px;width:178.90px;height:24.50px;background:#fff;border-radius:8px;box-shadow:0 0 0 1px rgba(30,40,60,.035),0 1px 2px rgba(30,40,60,.04)"></div><div class="a" style="left:1044.40px;top:385.40px;width:34.40px;height:18.00px;background:#25906a;border-radius:3px;"></div><div class="t" style="left:861.60px;width:400px;text-align:center;top:390.10px;font-size:10px;color:#fff;font-weight:400;">1-10</div><div class="t" style="left:899.10px;width:400px;text-align:center;top:390.30px;font-size:10px;color:#9ba1aa;font-weight:400;">89%</div><div class="a" style="left:1116.40px;top:387.00px;width:1.00px;height:15.00px;background:#eceef1;border-radius:0px;"></div><div class="t" style="left:946.10px;width:400px;text-align:center;top:389.91px;font-size:11.2px;color:#474c55;font-weight:400;">85</div><div class="t" style="left:995.60px;width:400px;text-align:center;top:390.30px;font-size:10px;color:#4cb860;font-weight:400;">+63</div><div class="a" style="left:1040.60px;top:408.20px;width:178.90px;height:24.50px;background:#fff;border-radius:8px;box-shadow:0 0 0 1px rgba(30,40,60,.035),0 1px 2px rgba(30,40,60,.04)"></div><div class="a" style="left:1044.40px;top:411.60px;width:34.40px;height:18.00px;background:#1dba97;border-radius:3px;"></div><div class="t" style="left:861.60px;width:400px;text-align:center;top:416.30px;font-size:10px;color:#fff;font-weight:400;">11-30</div><div class="t" style="left:899.10px;width:400px;text-align:center;top:416.50px;font-size:10px;color:#9ba1aa;font-weight:400;">11%</div><div class="a" style="left:1116.40px;top:413.20px;width:1.00px;height:15.00px;background:#eceef1;border-radius:0px;"></div><div class="t" style="left:946.10px;width:400px;text-align:center;top:416.11px;font-size:11.2px;color:#474c55;font-weight:400;">11</div><div class="t" style="left:995.60px;width:400px;text-align:center;top:416.50px;font-size:10px;color:#e04a4a;font-weight:400;">–5</div><div class="a" style="left:1229.00px;top:356.00px;width:178.50px;height:24.50px;background:#fff;border-radius:8px;box-shadow:0 0 0 1px rgba(30,40,60,.035),0 1px 2px rgba(30,40,60,.04)"></div><div class="a" style="left:1232.80px;top:359.40px;width:34.40px;height:18.00px;background:#8fd68f;border-radius:3px;"></div><div class="t" style="left:1050.00px;width:400px;text-align:center;top:364.10px;font-size:10px;color:#fff;font-weight:400;">31-50</div><div class="t" style="left:1087.50px;width:400px;text-align:center;top:364.30px;font-size:10px;color:#9ba1aa;font-weight:400;">0%</div><div class="a" style="left:1304.80px;top:361.00px;width:1.00px;height:15.00px;background:#eceef1;border-radius:0px;"></div><div class="t" style="left:1134.50px;width:400px;text-align:center;top:363.91px;font-size:11.2px;color:#474c55;font-weight:400;">0</div><div class="a" style="left:1379.70px;top:368.80px;width:8.20px;height:1.10px;background:#f2b06e;border-radius:0px;"></div><div class="a" style="left:1229.00px;top:382.00px;width:178.50px;height:24.50px;background:#fff;border-radius:8px;box-shadow:0 0 0 1px rgba(30,40,60,.035),0 1px 2px rgba(30,40,60,.04)"></div><div class="a" style="left:1232.80px;top:385.40px;width:34.40px;height:18.00px;background:#b9c1c0;border-radius:3px;"></div><div class="t" style="left:1050.00px;width:400px;text-align:center;top:390.10px;font-size:10px;color:#fff;font-weight:400;">51-100</div><div class="t" style="left:1087.50px;width:400px;text-align:center;top:390.30px;font-size:10px;color:#9ba1aa;font-weight:400;">0%</div><div class="a" style="left:1304.80px;top:387.00px;width:1.00px;height:15.00px;background:#eceef1;border-radius:0px;"></div><div class="t" style="left:1134.50px;width:400px;text-align:center;top:389.91px;font-size:11.2px;color:#474c55;font-weight:400;">0</div><div class="a" style="left:1379.70px;top:394.80px;width:8.20px;height:1.10px;background:#f2b06e;border-radius:0px;"></div><div class="a" style="left:1229.00px;top:408.20px;width:178.50px;height:24.50px;background:#fff;border-radius:8px;box-shadow:0 0 0 1px rgba(30,40,60,.035),0 1px 2px rgba(30,40,60,.04)"></div><div class="a" style="left:1232.80px;top:411.60px;width:34.40px;height:18.00px;background:#f6bf3a;border-radius:3px;"></div><div class="t" style="left:1050.00px;width:400px;text-align:center;top:416.30px;font-size:10px;color:#fff;font-weight:400;">100+</div><div class="t" style="left:1087.50px;width:400px;text-align:center;top:416.50px;font-size:10px;color:#9ba1aa;font-weight:400;">0%</div><div class="a" style="left:1304.80px;top:413.20px;width:1.00px;height:15.00px;background:#eceef1;border-radius:0px;"></div><div class="t" style="left:1134.50px;width:400px;text-align:center;top:416.11px;font-size:11.2px;color:#474c55;font-weight:400;">0</div><div class="a" style="left:1379.70px;top:421.00px;width:8.20px;height:1.10px;background:#f2b06e;border-radius:0px;"></div><div class="a" style="left:55.00px;top:443.00px;width:1352.00px;height:272.00px;background:#fff;border-radius:0px;border-radius:8px;box-shadow:0 0 0 1px rgba(30,40,60,.045)"></div><div class="a" style="left:64.3px;top:448.2px;width:256px;height:24px;border:1px solid #e3e6ea;border-radius:7px;background:#fff"></div><svg style="left:69.50px;top:453.50px;" width="14" height="14" viewBox="0 0 14 14"><circle cx="5.8" cy="5.8" r="4.8" fill="none" stroke="#4a525e" stroke-width="1.5"/><path d="M9.4 9.4l3.4 3.4" stroke="#4a525e" stroke-width="1.6" stroke-linecap="round"/></svg><div class="t" style="left:89.80px;top:454.78px;font-size:11.27px;color:#9ca2aa;font-weight:400;">Поиск по запросам</div><div class="a" style="left:924.00px;top:448.00px;width:153.00px;height:24.00px;background:#eceef2;border-radius:7px;"></div><div class="a" style="left:925.60px;top:449.50px;width:71.40px;height:21.00px;background:#fff;border-radius:6px;box-shadow:0 0 1px rgba(0,0,0,.06)"></div><div class="t" style="left:938.00px;top:454.63px;font-size:11.58px;color:#4a4f58;font-weight:400;">Позиции</div><div class="t" style="left:1010.60px;top:454.74px;font-size:11.35px;color:#4a4f58;font-weight:400;">Сниппеты</div><svg style="left:1080.00px;top:448.00px;" width="24" height="24" viewBox="0 0 24 24"><path d="M9.3 14V5M5.8 8.4l3.5-3.6 3.5 3.6M15.4 10.2v8.9M12.1 15.6l3.3 3.5 3.4-3.5" fill="none" stroke="#4a525e" stroke-width="1.5" stroke-linecap="round" stroke-linejoin="round"/></svg><div class="t" style="left:1104.60px;top:454.82px;font-size:11.19px;color:#4f555e;font-weight:400;">Сортировка</div><svg style="left:1176.00px;top:448.00px;" width="28" height="24" viewBox="0 0 28 24"><path d="M7 5.4h11.4a0.8 0.8 0 0 1 .6 1.3L14.3 11.6V17.4a1 1 0 0 1-1 1h-0.9a1 1 0 0 1-1-1V11.6L6.4 6.7a0.8 0.8 0 0 1 .6-1.3z" fill="none" stroke="#4a525e" stroke-width="1.5" stroke-linejoin="round"/></svg><div class="t" style="left:1200.80px;top:454.66px;font-size:11.52px;color:#4f555e;font-weight:400;">Фильтр</div><svg style="left:1254.00px;top:448.00px;" width="28" height="24" viewBox="0 0 28 24"><rect x="7.3" y="5.3" width="13.3" height="13.3" rx="2.2" fill="none" stroke="#4a525e" stroke-width="1.5"/><path d="M7.3 9.7h13.3M11.5 5.3v13.3" stroke="#4a525e" stroke-width="1.5"/></svg><div class="t" style="left:1280.60px;top:454.81px;font-size:11.2px;color:#4f555e;font-weight:400;">Настройки вида</div><svg style="left:1372.00px;top:448.00px;" width="28" height="24" viewBox="0 0 28 24"><path d="M9.8 13.1L7.4 10.4a1.3 1.3 0 0 1 0-1.8L10.2 5.8a1.3 1.3 0 0 1 1.8 0L14.4 8.2M17.7 11.1L19.6 13.1a1.3 1.3 0 0 1 0 1.8L16.9 17.7a1.3 1.3 0 0 1-1.8 0L12.4 15.4M12.6 12.7l1.6-1.7" fill="none" stroke="#4a525e" stroke-width="1.5" stroke-linecap="round"/><path d="M16.8 5.6L20 8.3 16.8 8.5z M7 15.4L10.1 15.5 9.9 18.6z" fill="#4a525e" stroke="#4a525e" stroke-width="0.8" stroke-linejoin="round"/></svg><div class="a" style="left:55.00px;top:477.60px;width:1352.00px;height:1.00px;background:#e7e9ed;border-radius:0px;"></div><div class="a" style="left:55.00px;top:516.60px;width:809.00px;height:1.00px;background:#e7e9ed;border-radius:0px;"></div><div class="a" style="left:92.80px;top:478.00px;width:1.00px;height:39.00px;background:#e7e9ed;border-radius:0px;"></div><div class="a" style="left:267.90px;top:478.00px;width:1.00px;height:39.00px;background:#e7e9ed;border-radius:0px;"></div><svg style="left:66.50px;top:490.00px;" width="15" height="15" viewBox="0 0 15 15"><circle cx="7.5" cy="7.5" r="5.4" fill="none" stroke="#5d6673" stroke-width="1.4"/><path d="M7.5 0.8v3.6M7.5 10.6v3.6M0.8 7.5h3.6M10.6 7.5h3.6" stroke="#5d6673" stroke-width="1.4" stroke-linecap="round"/><circle cx="7.5" cy="7.5" r="0.9" fill="#5d6673"/></svg><div class="t" style="left:100.00px;top:492.04px;font-size:12.37px;color:#33383f;font-weight:700;">Запросы</div><div class="t" style="left:170.40px;top:493.23px;font-size:10.35px;color:#9aa0a8;font-weight:400;">(96)</div><div class="t" style="left:97.40px;width:400px;text-align:center;top:482.74px;font-size:10.74px;color:#4a4f58;font-weight:400;">Частота</div><div class="t" style="left:97.70px;width:400px;text-align:center;top:499.86px;font-size:10.5px;color:#3f8ae0;font-weight:400;">"!Ч"</div><div class="a" style="left:326.00px;top:478.00px;width:1.00px;height:39.00px;background:#e7e9ed;border-radius:0px;"></div><div class="t" style="left:329.10px;top:484.09px;font-size:10.83px;color:#41464e;font-weight:400;">30.06.2025</div><div class="t" style="left:329.10px;top:499.68px;font-size:7.6px;color:#a3a8b0;font-weight:400;">1-10</div><div class="t" style="left:329.10px;top:506.69px;font-size:9.2px;color:#a3a8b0;font-weight:400;">89%</div><div class="a" style="left:385.72px;top:478.00px;width:1.00px;height:39.00px;background:#e7e9ed;border-radius:0px;"></div><div class="t" style="left:388.82px;top:484.09px;font-size:10.83px;color:#41464e;font-weight:400;">30.05.2025</div><div class="t" style="left:388.82px;top:499.68px;font-size:7.6px;color:#a3a8b0;font-weight:400;">1-10</div><div class="t" style="left:388.82px;top:506.69px;font-size:9.2px;color:#a3a8b0;font-weight:400;">97%</div><div class="a" style="left:445.44px;top:478.00px;width:1.00px;height:39.00px;background:#e7e9ed;border-radius:0px;"></div><div class="t" style="left:448.54px;top:484.09px;font-size:10.83px;color:#41464e;font-weight:400;">30.04.2025</div><div class="t" style="left:448.54px;top:499.68px;font-size:7.6px;color:#a3a8b0;font-weight:400;">1-10</div><div class="t" style="left:448.54px;top:506.69px;font-size:9.2px;color:#a3a8b0;font-weight:400;">97%</div><div class="a" style="left:505.17px;top:478.00px;width:1.00px;height:39.00px;background:#e7e9ed;border-radius:0px;"></div><div class="t" style="left:508.27px;top:484.09px;font-size:10.83px;color:#41464e;font-weight:400;">31.03.2025</div><div class="t" style="left:508.27px;top:499.68px;font-size:7.6px;color:#a3a8b0;font-weight:400;">1-10</div><div class="t" style="left:508.27px;top:506.69px;font-size:9.2px;color:#a3a8b0;font-weight:400;">76%</div><div class="a" style="left:564.89px;top:478.00px;width:1.00px;height:39.00px;background:#e7e9ed;border-radius:0px;"></div><div class="t" style="left:567.99px;top:484.09px;font-size:10.83px;color:#41464e;font-weight:400;">28.02.2025</div><div class="t" style="left:567.99px;top:499.68px;font-size:7.6px;color:#a3a8b0;font-weight:400;">1-10</div><div class="t" style="left:567.99px;top:506.69px;font-size:9.2px;color:#a3a8b0;font-weight:400;">67%</div><div class="a" style="left:624.61px;top:478.00px;width:1.00px;height:39.00px;background:#e7e9ed;border-radius:0px;"></div><div class="t" style="left:627.71px;top:484.09px;font-size:10.83px;color:#41464e;font-weight:400;">31.01.2025</div><div class="t" style="left:627.71px;top:499.68px;font-size:7.6px;color:#a3a8b0;font-weight:400;">1-10</div><div class="t" style="left:627.71px;top:506.69px;font-size:9.2px;color:#a3a8b0;font-weight:400;">45%</div><div class="a" style="left:684.33px;top:478.00px;width:1.00px;height:39.00px;background:#e7e9ed;border-radius:0px;"></div><div class="t" style="left:687.43px;top:484.09px;font-size:10.83px;color:#41464e;font-weight:400;">28.12.2024</div><div class="t" style="left:687.43px;top:499.68px;font-size:7.6px;color:#a3a8b0;font-weight:400;">1-10</div><div class="t" style="left:687.43px;top:506.69px;font-size:9.2px;color:#a3a8b0;font-weight:400;">85%</div><div class="a" style="left:744.06px;top:478.00px;width:1.00px;height:39.00px;background:#e7e9ed;border-radius:0px;"></div><div class="t" style="left:747.16px;top:484.09px;font-size:10.83px;color:#41464e;font-weight:400;">29.11.2024</div><div class="t" style="left:747.16px;top:499.68px;font-size:7.6px;color:#a3a8b0;font-weight:400;">1-10</div><div class="t" style="left:747.16px;top:506.69px;font-size:9.2px;color:#a3a8b0;font-weight:400;">76%</div><div class="a" style="left:803.78px;top:478.00px;width:1.00px;height:39.00px;background:#e7e9ed;border-radius:0px;"></div><div class="t" style="left:806.88px;top:484.09px;font-size:10.83px;color:#41464e;font-weight:400;">31.10.2024</div><div class="t" style="left:806.88px;top:499.68px;font-size:7.6px;color:#a3a8b0;font-weight:400;">1-10</div><div class="t" style="left:806.88px;top:506.69px;font-size:9.2px;color:#a3a8b0;font-weight:400;">58%</div><div class="a" style="left:863.50px;top:478.00px;width:1.00px;height:39.00px;background:#e7e9ed;border-radius:0px;"></div><div class="a" style="left:55.00px;top:517.60px;width:809.00px;height:29.80px;background:#f8f9fb;border-radius:0px;"></div><div class="a" style="left:55.00px;top:547.00px;width:809.00px;height:1.00px;background:#e7e9ed;border-radius:0px;"></div><div class="t" style="left:61.20px;top:532.20px;font-size:13.07px;color:#5a5f67;font-weight:400;">Двери общее</div><div class="a" style="left:55px;top:547.4px;width:1352px;height:167.6px;overflow:hidden;border-radius:0 0 8px 8px"><div class="a" style="left:0.00px;top:30.60px;width:809.00px;height:1.00px;background:#e7e9ed;"></div><div class="a" style="left:37.80px;top:0.00px;width:1.00px;height:31.00px;background:#e7e9ed;"></div><div class="a" style="left:213.50px;top:0.00px;width:1.00px;height:31.00px;background:#e7e9ed;"></div><div class="a" style="left:14.40px;top:15.20px;width:9.20px;height:1.40px;background:#6a7079;"></div><div class="t" style="left:44.60px;top:11.03px;font-size:10.55px;color:#50555d;font-weight:400;">двери барнаул</div><div class="t" style="left:142.40px;width:200px;text-align:center;top:10.71px;font-size:10.8px;color:#50555d;font-weight:400;">97</div><div class="a" style="left:271.50px;top:0.00px;width:59.72px;height:31.00px;background:#bff8d8;"></div><svg style="left:324.62px;top:0.60px" width="6" height="6"><path d="M0 0H6V6z" fill="#6b8984"/></svg><div class="t" style="left:277.80px;top:9.83px;font-size:12.6px;color:#37423f;font-weight:400;">9</div><div class="t" style="left:288.00px;top:7.78px;font-size:7.6px;color:#de4b34;font-weight:400;"><span style="font-size:5px;vertical-align:1px">▾</span>3</div><div class="a" style="left:331.22px;top:0.00px;width:59.72px;height:31.00px;background:#a6f0c6;"></div><svg style="left:384.34px;top:0.60px" width="6" height="6"><path d="M0 0H6V6z" fill="#6b8984"/></svg><div class="t" style="left:337.52px;top:9.83px;font-size:12.6px;color:#37423f;font-weight:400;">6</div><div class="a" style="left:390.94px;top:0.00px;width:59.72px;height:31.00px;background:#a6f0c6;"></div><div class="t" style="left:397.24px;top:9.83px;font-size:12.6px;color:#37423f;font-weight:400;">6</div><div class="t" style="left:407.44px;top:7.78px;font-size:7.6px;color:#4cbf6a;font-weight:400;"><span style="font-size:5px;vertical-align:1px">▴</span>5</div><div class="a" style="left:450.67px;top:0.00px;width:59.72px;height:31.00px;background:#fde1e2;"></div><div class="t" style="left:456.97px;top:9.83px;font-size:12.6px;color:#37423f;font-weight:400;">11</div><div class="t" style="left:474.17px;top:7.78px;font-size:7.6px;color:#de4b34;font-weight:400;"><span style="font-size:5px;vertical-align:1px">▾</span>2</div><div class="a" style="left:510.39px;top:0.00px;width:59.72px;height:31.00px;background:#bff8d8;"></div><div class="t" style="left:516.69px;top:9.83px;font-size:12.6px;color:#37423f;font-weight:400;">9</div><div class="t" style="left:526.89px;top:7.78px;font-size:7.6px;color:#4cbf6a;font-weight:400;"><span style="font-size:5px;vertical-align:1px">▴</span>3</div><div class="a" style="left:570.11px;top:0.00px;width:59.72px;height:31.00px;background:#fde1e2;"></div><div class="t" style="left:576.41px;top:9.83px;font-size:12.6px;color:#37423f;font-weight:400;">12</div><div class="t" style="left:593.61px;top:7.78px;font-size:7.6px;color:#de4b34;font-weight:400;"><span style="font-size:5px;vertical-align:1px">▾</span>3</div><div class="a" style="left:629.83px;top:0.00px;width:59.72px;height:31.00px;background:#bff8d8;"></div><div class="t" style="left:636.13px;top:9.83px;font-size:12.6px;color:#37423f;font-weight:400;">9</div><div class="t" style="left:646.33px;top:7.78px;font-size:7.6px;color:#de4b34;font-weight:400;"><span style="font-size:5px;vertical-align:1px">▾</span>1</div><div class="a" style="left:689.56px;top:0.00px;width:59.72px;height:31.00px;background:#a6f0c6;"></div><svg style="left:742.68px;top:0.60px" width="6" height="6"><path d="M0 0H6V6z" fill="#6b8984"/></svg><div class="t" style="left:695.86px;top:9.83px;font-size:12.6px;color:#37423f;font-weight:400;">8</div><div class="t" style="left:706.06px;top:7.78px;font-size:7.6px;color:#4cbf6a;font-weight:400;"><span style="font-size:5px;vertical-align:1px">▴</span>5</div><div class="a" style="left:749.28px;top:0.00px;width:59.72px;height:31.00px;background:#ffffff;"></div><div class="t" style="left:755.58px;top:9.83px;font-size:12.6px;color:#37423f;font-weight:400;">13</div><div class="a" style="left:0.00px;top:61.60px;width:809.00px;height:1.00px;background:#e7e9ed;"></div><div class="a" style="left:37.80px;top:31.00px;width:1.00px;height:30.70px;background:#e7e9ed;"></div><div class="a" style="left:213.50px;top:31.00px;width:1.00px;height:30.70px;background:#e7e9ed;"></div><div class="a" style="left:14.40px;top:46.20px;width:9.20px;height:1.40px;background:#6a7079;"></div><div class="t" style="left:44.60px;top:41.88px;font-size:10.55px;color:#50555d;font-weight:400;">купить двери</div><div class="t" style="left:142.40px;width:200px;text-align:center;top:41.56px;font-size:10.8px;color:#50555d;font-weight:400;">3</div><div class="a" style="left:271.50px;top:31.00px;width:59.72px;height:30.70px;background:#fde1e2;"></div><svg style="left:324.62px;top:31.60px" width="6" height="6"><path d="M0 0H6V6z" fill="#6b8984"/></svg><div class="t" style="left:277.80px;top:40.68px;font-size:12.6px;color:#37423f;font-weight:400;">11</div><div class="t" style="left:295.00px;top:38.63px;font-size:7.6px;color:#de4b34;font-weight:400;"><span style="font-size:5px;vertical-align:1px">▾</span>2</div><div class="a" style="left:331.22px;top:31.00px;width:59.72px;height:30.70px;background:#bff8d8;"></div><svg style="left:384.34px;top:31.60px" width="6" height="6"><path d="M0 0H6V6z" fill="#6b8984"/></svg><div class="t" style="left:337.52px;top:40.68px;font-size:12.6px;color:#37423f;font-weight:400;">9</div><div class="t" style="left:347.72px;top:38.63px;font-size:7.6px;color:#de4b34;font-weight:400;"><span style="font-size:5px;vertical-align:1px">▾</span>1</div><div class="a" style="left:390.94px;top:31.00px;width:59.72px;height:30.70px;background:#a6f0c6;"></div><svg style="left:444.07px;top:31.60px" width="6" height="6"><path d="M0 0H6V6z" fill="#6b8984"/></svg><div class="t" style="left:397.24px;top:40.68px;font-size:12.6px;color:#37423f;font-weight:400;">8</div><div class="t" style="left:407.44px;top:38.63px;font-size:7.6px;color:#4cbf6a;font-weight:400;"><span style="font-size:5px;vertical-align:1px">▴</span>5</div><div class="a" style="left:450.67px;top:31.00px;width:59.72px;height:30.70px;background:#bff8d8;"></div><div class="t" style="left:456.97px;top:40.68px;font-size:12.6px;color:#37423f;font-weight:400;">13</div><div class="t" style="left:474.17px;top:38.63px;font-size:7.6px;color:#4cbf6a;font-weight:400;"><span style="font-size:5px;vertical-align:1px">▴</span>2</div><div class="a" style="left:510.39px;top:31.00px;width:59.72px;height:30.70px;background:#cef9e2;"></div><div class="t" style="left:516.69px;top:40.68px;font-size:12.6px;color:#37423f;font-weight:400;">15</div><div class="t" style="left:533.89px;top:38.63px;font-size:7.6px;color:#4cbf6a;font-weight:400;"><span style="font-size:5px;vertical-align:1px">▴</span>3</div><div class="a" style="left:570.11px;top:31.00px;width:59.72px;height:30.70px;background:#ffffff;"></div><div class="t" style="left:576.41px;top:40.68px;font-size:12.6px;color:#37423f;font-weight:400;">18</div><div class="t" style="left:593.61px;top:38.63px;font-size:7.6px;color:#de4b34;font-weight:400;"><span style="font-size:5px;vertical-align:1px">▾</span>5</div><div class="a" style="left:629.83px;top:31.00px;width:59.72px;height:30.70px;background:#ffffff;"></div><div class="t" style="left:636.13px;top:40.68px;font-size:12.6px;color:#37423f;font-weight:400;">13</div><div class="t" style="left:653.33px;top:38.63px;font-size:7.6px;color:#de4b34;font-weight:400;"><span style="font-size:5px;vertical-align:1px">▾</span>1</div><div class="a" style="left:689.56px;top:31.00px;width:59.72px;height:30.70px;background:#bff8d8;"></div><svg style="left:742.68px;top:31.60px" width="6" height="6"><path d="M0 0H6V6z" fill="#6b8984"/></svg><div class="t" style="left:695.86px;top:40.68px;font-size:12.6px;color:#37423f;font-weight:400;">12</div><div class="t" style="left:713.06px;top:38.63px;font-size:7.6px;color:#4cbf6a;font-weight:400;"><span style="font-size:5px;vertical-align:1px">▴</span>1</div><div class="a" style="left:749.28px;top:31.00px;width:59.72px;height:30.70px;background:#ffffff;"></div><div class="t" style="left:755.58px;top:40.68px;font-size:12.6px;color:#37423f;font-weight:400;">13</div><div class="a" style="left:0.00px;top:91.60px;width:809.00px;height:1.00px;background:#e7e9ed;"></div><div class="a" style="left:37.80px;top:61.70px;width:1.00px;height:30.30px;background:#e7e9ed;"></div><div class="a" style="left:213.50px;top:61.70px;width:1.00px;height:30.30px;background:#e7e9ed;"></div><div class="a" style="left:14.40px;top:77.20px;width:9.20px;height:1.40px;background:#6a7079;"></div><div class="t" style="left:44.60px;top:72.38px;font-size:10.55px;color:#50555d;font-weight:400;">купить двери в барнауле</div><div class="t" style="left:142.40px;width:200px;text-align:center;top:72.06px;font-size:10.8px;color:#50555d;font-weight:400;">35</div><div class="a" style="left:271.50px;top:61.70px;width:59.72px;height:30.30px;background:#97ebba;"></div><div class="t" style="left:277.80px;top:71.18px;font-size:12.6px;color:#37423f;font-weight:400;">6</div><div class="t" style="left:288.00px;top:69.13px;font-size:7.6px;color:#4cbf6a;font-weight:400;"><span style="font-size:5px;vertical-align:1px">▴</span>4</div><div class="a" style="left:331.22px;top:61.70px;width:59.72px;height:30.30px;background:#cef9e2;"></div><div class="t" style="left:337.52px;top:71.18px;font-size:12.6px;color:#37423f;font-weight:400;">10</div><div class="t" style="left:354.72px;top:69.13px;font-size:7.6px;color:#de4b34;font-weight:400;"><span style="font-size:5px;vertical-align:1px">▾</span>2</div><div class="a" style="left:390.94px;top:61.70px;width:59.72px;height:30.30px;background:#bff8d8;"></div><div class="t" style="left:397.24px;top:71.18px;font-size:12.6px;color:#37423f;font-weight:400;">8</div><div class="t" style="left:407.44px;top:69.13px;font-size:7.6px;color:#4cbf6a;font-weight:400;"><span style="font-size:5px;vertical-align:1px">▴</span>2</div><div class="a" style="left:450.67px;top:61.70px;width:59.72px;height:30.30px;background:#bff8d8;"></div><div class="t" style="left:456.97px;top:71.18px;font-size:12.6px;color:#37423f;font-weight:400;">10</div><div class="t" style="left:474.17px;top:69.13px;font-size:7.6px;color:#4cbf6a;font-weight:400;"><span style="font-size:5px;vertical-align:1px">▴</span>6</div><div class="a" style="left:510.39px;top:61.70px;width:59.72px;height:30.30px;background:#ffffff;"></div><div class="t" style="left:516.69px;top:71.18px;font-size:12.6px;color:#37423f;font-weight:400;">16</div><div class="a" style="left:570.11px;top:61.70px;width:59.72px;height:30.30px;background:#fde1e2;"></div><svg style="left:623.23px;top:62.30px" width="6" height="6"><path d="M0 0H6V6z" fill="#6b8984"/></svg><div class="t" style="left:576.41px;top:71.18px;font-size:12.6px;color:#37423f;font-weight:400;">16</div><div class="t" style="left:593.61px;top:69.13px;font-size:7.6px;color:#de4b34;font-weight:400;"><span style="font-size:5px;vertical-align:1px">▾</span>9</div><div class="a" style="left:629.83px;top:61.70px;width:59.72px;height:30.30px;background:#a6f0c6;"></div><svg style="left:682.96px;top:62.30px" width="6" height="6"><path d="M0 0H6V6z" fill="#6b8984"/></svg><div class="t" style="left:636.13px;top:71.18px;font-size:12.6px;color:#37423f;font-weight:400;">7</div><div class="t" style="left:646.33px;top:69.13px;font-size:7.6px;color:#4cbf6a;font-weight:400;"><span style="font-size:5px;vertical-align:1px">▴</span>3</div><div class="a" style="left:689.56px;top:61.70px;width:59.72px;height:30.30px;background:#bff8d8;"></div><svg style="left:742.68px;top:62.30px" width="6" height="6"><path d="M0 0H6V6z" fill="#6b8984"/></svg><div class="t" style="left:695.86px;top:71.18px;font-size:12.6px;color:#37423f;font-weight:400;">10</div><div class="t" style="left:713.06px;top:69.13px;font-size:7.6px;color:#4cbf6a;font-weight:400;"><span style="font-size:5px;vertical-align:1px">▴</span>2</div><div class="a" style="left:749.28px;top:61.70px;width:59.72px;height:30.30px;background:#ffffff;"></div><div class="t" style="left:755.58px;top:71.18px;font-size:12.6px;color:#37423f;font-weight:400;">12</div><div class="a" style="left:0.00px;top:122.60px;width:809.00px;height:1.00px;background:#e7e9ed;"></div><div class="a" style="left:37.80px;top:92.00px;width:1.00px;height:30.60px;background:#e7e9ed;"></div><div class="a" style="left:213.50px;top:92.00px;width:1.00px;height:30.60px;background:#e7e9ed;"></div><div class="a" style="left:14.40px;top:107.20px;width:9.20px;height:1.40px;background:#6a7079;"></div><div class="t" style="left:44.60px;top:102.83px;font-size:10.55px;color:#50555d;font-weight:400;">магазин дверей</div><div class="t" style="left:142.40px;width:200px;text-align:center;top:102.51px;font-size:10.8px;color:#50555d;font-weight:400;">2</div><div class="a" style="left:271.50px;top:92.00px;width:59.72px;height:30.60px;background:#a6f0c6;"></div><div class="t" style="left:277.80px;top:101.63px;font-size:12.6px;color:#37423f;font-weight:400;">5</div><div class="t" style="left:288.00px;top:99.58px;font-size:7.6px;color:#de4b34;font-weight:400;"><span style="font-size:5px;vertical-align:1px">▾</span>1</div><div class="a" style="left:331.22px;top:92.00px;width:59.72px;height:30.60px;background:#97ebba;"></div><div class="t" style="left:337.52px;top:101.63px;font-size:12.6px;color:#37423f;font-weight:400;">4</div><div class="t" style="left:347.72px;top:99.58px;font-size:7.6px;color:#4cbf6a;font-weight:400;"><span style="font-size:5px;vertical-align:1px">▴</span>1</div><div class="a" style="left:390.94px;top:92.00px;width:59.72px;height:30.60px;background:#a6f0c6;"></div><div class="t" style="left:397.24px;top:101.63px;font-size:12.6px;color:#37423f;font-weight:400;">5</div><div class="t" style="left:407.44px;top:99.58px;font-size:7.6px;color:#4cbf6a;font-weight:400;"><span style="font-size:5px;vertical-align:1px">▴</span>1</div><div class="a" style="left:450.67px;top:92.00px;width:59.72px;height:30.60px;background:#a6f0c6;"></div><div class="t" style="left:456.97px;top:101.63px;font-size:12.6px;color:#37423f;font-weight:400;">6</div><div class="t" style="left:467.17px;top:99.58px;font-size:7.6px;color:#4cbf6a;font-weight:400;"><span style="font-size:5px;vertical-align:1px">▴</span>5</div><div class="a" style="left:510.39px;top:92.00px;width:59.72px;height:30.60px;background:#fde1e2;"></div><div class="t" style="left:516.69px;top:101.63px;font-size:12.6px;color:#37423f;font-weight:400;">11</div><div class="t" style="left:533.89px;top:99.58px;font-size:7.6px;color:#de4b34;font-weight:400;"><span style="font-size:5px;vertical-align:1px">▾</span>2</div><div class="a" style="left:570.11px;top:92.00px;width:59.72px;height:30.60px;background:#bff8d8;"></div><div class="t" style="left:576.41px;top:101.63px;font-size:12.6px;color:#37423f;font-weight:400;">9</div><div class="a" style="left:629.83px;top:92.00px;width:59.72px;height:30.60px;background:#bff8d8;"></div><div class="t" style="left:636.13px;top:101.63px;font-size:12.6px;color:#37423f;font-weight:400;">9</div><div class="a" style="left:689.56px;top:92.00px;width:59.72px;height:30.60px;background:#f3f4f6;"></div><div class="a" style="left:749.28px;top:92.00px;width:59.72px;height:30.60px;background:#f3f4f6;"></div><div class="a" style="left:0.00px;top:152.60px;width:809.00px;height:1.00px;background:#e7e9ed;"></div><div class="a" style="left:37.80px;top:122.60px;width:1.00px;height:30.60px;background:#e7e9ed;"></div><div class="a" style="left:213.50px;top:122.60px;width:1.00px;height:30.60px;background:#e7e9ed;"></div><div class="a" style="left:14.40px;top:138.20px;width:9.20px;height:1.40px;background:#6a7079;"></div><div class="t" style="left:44.60px;top:133.43px;font-size:10.55px;color:#50555d;font-weight:400;">магазин дверей в барнауле</div><div class="t" style="left:142.40px;width:200px;text-align:center;top:133.11px;font-size:10.8px;color:#50555d;font-weight:400;">15</div><div class="a" style="left:271.50px;top:122.60px;width:59.72px;height:30.60px;background:#bff8d8;"></div><div class="t" style="left:277.80px;top:132.23px;font-size:12.6px;color:#37423f;font-weight:400;">9</div><div class="t" style="left:288.00px;top:130.18px;font-size:7.6px;color:#de4b34;font-weight:400;"><span style="font-size:5px;vertical-align:1px">▾</span>3</div><div class="a" style="left:331.22px;top:122.60px;width:59.72px;height:30.60px;background:#a6f0c6;"></div><div class="t" style="left:337.52px;top:132.23px;font-size:12.6px;color:#37423f;font-weight:400;">6</div><div class="a" style="left:390.94px;top:122.60px;width:59.72px;height:30.60px;background:#a6f0c6;"></div><div class="t" style="left:397.24px;top:132.23px;font-size:12.6px;color:#37423f;font-weight:400;">6</div><div class="t" style="left:407.44px;top:130.18px;font-size:7.6px;color:#4cbf6a;font-weight:400;"><span style="font-size:5px;vertical-align:1px">▴</span>1</div><div class="a" style="left:450.67px;top:122.60px;width:59.72px;height:30.60px;background:#a6f0c6;"></div><div class="t" style="left:456.97px;top:132.23px;font-size:12.6px;color:#37423f;font-weight:400;">7</div><div class="t" style="left:467.17px;top:130.18px;font-size:7.6px;color:#4cbf6a;font-weight:400;"><span style="font-size:5px;vertical-align:1px">▴</span>3</div><div class="a" style="left:510.39px;top:122.60px;width:59.72px;height:30.60px;background:#cef9e2;"></div><div class="t" style="left:516.69px;top:132.23px;font-size:12.6px;color:#37423f;font-weight:400;">10</div><div class="t" style="left:533.89px;top:130.18px;font-size:7.6px;color:#de4b34;font-weight:400;"><span style="font-size:5px;vertical-align:1px">▾</span>3</div><div class="a" style="left:570.11px;top:122.60px;width:59.72px;height:30.60px;background:#a6f0c6;"></div><div class="t" style="left:576.41px;top:132.23px;font-size:12.6px;color:#37423f;font-weight:400;">7</div><div class="t" style="left:586.61px;top:130.18px;font-size:7.6px;color:#de4b34;font-weight:400;"><span style="font-size:5px;vertical-align:1px">▾</span>1</div><div class="a" style="left:629.83px;top:122.60px;width:59.72px;height:30.60px;background:#a6f0c6;"></div><div class="t" style="left:636.13px;top:132.23px;font-size:12.6px;color:#37423f;font-weight:400;">6</div><div class="a" style="left:689.56px;top:122.60px;width:59.72px;height:30.60px;background:#f3f4f6;"></div><div class="a" style="left:749.28px;top:122.60px;width:59.72px;height:30.60px;background:#f3f4f6;"></div><div class="a" style="left:0.00px;top:183.60px;width:809.00px;height:1.00px;background:#e7e9ed;"></div><div class="a" style="left:37.80px;top:153.20px;width:1.00px;height:30.60px;background:#e7e9ed;"></div><div class="a" style="left:213.50px;top:153.20px;width:1.00px;height:30.60px;background:#e7e9ed;"></div><div class="a" style="left:14.40px;top:168.20px;width:9.20px;height:1.40px;background:#6a7079;"></div><div class="t" style="left:44.60px;top:164.03px;font-size:10.55px;color:#50555d;font-weight:400;">все купить двери барнаул</div><div class="t" style="left:142.40px;width:200px;text-align:center;top:163.71px;font-size:10.8px;color:#50555d;font-weight:400;">1</div><div class="a" style="left:271.50px;top:153.20px;width:59.72px;height:30.60px;background:#cee0fb;"></div><div class="t" style="left:277.80px;top:162.83px;font-size:12.6px;color:#37423f;font-weight:400;">3</div><div class="t" style="left:288.00px;top:160.78px;font-size:7.6px;color:#de4b34;font-weight:400;"><span style="font-size:5px;vertical-align:1px">▾</span>1</div><div class="a" style="left:331.22px;top:153.20px;width:59.72px;height:30.60px;background:#cee0fb;"></div><div class="t" style="left:337.52px;top:162.83px;font-size:12.6px;color:#37423f;font-weight:400;">2</div><div class="t" style="left:347.72px;top:160.78px;font-size:7.6px;color:#4cbf6a;font-weight:400;"><span style="font-size:5px;vertical-align:1px">▴</span>1</div><div class="a" style="left:390.94px;top:153.20px;width:59.72px;height:30.60px;background:#cee0fb;"></div><div class="t" style="left:397.24px;top:162.83px;font-size:12.6px;color:#37423f;font-weight:400;">3</div><div class="a" style="left:450.67px;top:153.20px;width:59.72px;height:30.60px;background:#cee0fb;"></div><div class="t" style="left:456.97px;top:162.83px;font-size:12.6px;color:#37423f;font-weight:400;">3</div><div class="t" style="left:467.17px;top:160.78px;font-size:7.6px;color:#4cbf6a;font-weight:400;"><span style="font-size:5px;vertical-align:1px">▴</span>8</div><div class="a" style="left:510.39px;top:153.20px;width:59.72px;height:30.60px;background:#bff8d8;"></div><div class="t" style="left:516.69px;top:162.83px;font-size:12.6px;color:#37423f;font-weight:400;">11</div><div class="t" style="left:533.89px;top:160.78px;font-size:7.6px;color:#4cbf6a;font-weight:400;"><span style="font-size:5px;vertical-align:1px">▴</span>6</div><div class="a" style="left:570.11px;top:153.20px;width:59.72px;height:30.60px;background:#fde1e2;"></div><div class="t" style="left:576.41px;top:162.83px;font-size:12.6px;color:#37423f;font-weight:400;">17</div><div class="t" style="left:593.61px;top:160.78px;font-size:7.6px;color:#de4b34;font-weight:400;"><span style="font-size:5px;vertical-align:1px">▾</span>12</div><div class="a" style="left:629.83px;top:153.20px;width:59.72px;height:30.60px;background:#a6f0c6;"></div><div class="t" style="left:636.13px;top:162.83px;font-size:12.6px;color:#37423f;font-weight:400;">5</div><div class="a" style="left:689.56px;top:153.20px;width:59.72px;height:30.60px;background:#f3f4f6;"></div><div class="a" style="left:749.28px;top:153.20px;width:59.72px;height:30.60px;background:#f3f4f6;"></div><div class="a" style="left:271.00px;top:0.00px;width:1.00px;height:183.80px;background:#bccadb;"></div><div class="a" style="left:330.72px;top:0.00px;width:1.00px;height:183.80px;background:#bccadb;"></div><div class="a" style="left:390.44px;top:0.00px;width:1.00px;height:183.80px;background:#bccadb;"></div><div class="a" style="left:450.17px;top:0.00px;width:1.00px;height:183.80px;background:#bccadb;"></div><div class="a" style="left:509.89px;top:0.00px;width:1.00px;height:183.80px;background:#bccadb;"></div><div class="a" style="left:569.61px;top:0.00px;width:1.00px;height:183.80px;background:#bccadb;"></div><div class="a" style="left:629.33px;top:0.00px;width:1.00px;height:183.80px;background:#bccadb;"></div><div class="a" style="left:689.06px;top:0.00px;width:1.00px;height:183.80px;background:#bccadb;"></div><div class="a" style="left:748.78px;top:0.00px;width:1.00px;height:183.80px;background:#bccadb;"></div><div class="a" style="left:808.50px;top:0.00px;width:1.00px;height:183.80px;background:#bccadb;"></div><div class="a" style="left:271.50px;top:-0.40px;width:537.50px;height:1.00px;background:#b9c7d8;"></div><div class="a" style="left:271.50px;top:30.60px;width:537.50px;height:1.00px;background:#b9c7d8;"></div><div class="a" style="left:271.50px;top:61.60px;width:537.50px;height:1.00px;background:#b9c7d8;"></div><div class="a" style="left:271.50px;top:91.60px;width:537.50px;height:1.00px;background:#b9c7d8;"></div><div class="a" style="left:271.50px;top:122.60px;width:537.50px;height:1.00px;background:#b9c7d8;"></div><div class="a" style="left:271.50px;top:152.60px;width:537.50px;height:1.00px;background:#b9c7d8;"></div><div class="a" style="left:271.50px;top:183.60px;width:537.50px;height:1.00px;background:#b9c7d8;"></div></div></body></html>
